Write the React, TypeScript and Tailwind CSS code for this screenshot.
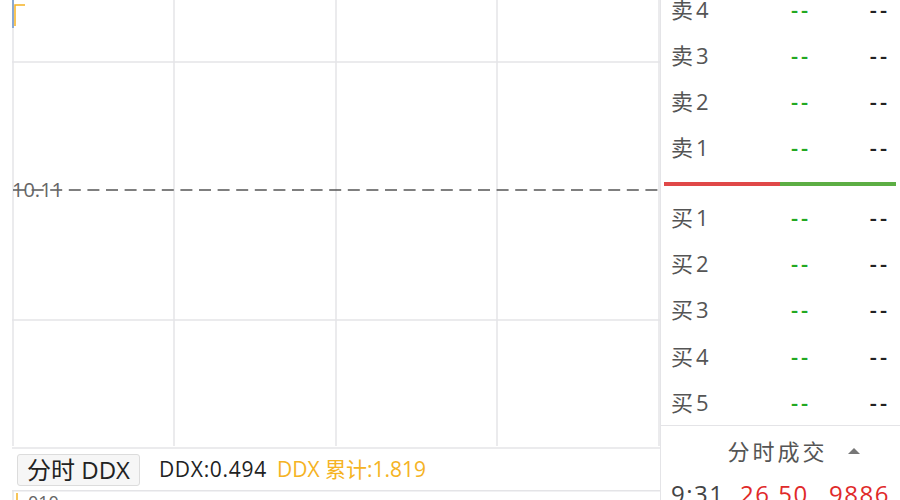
import React from "react";

const sells = ["卖4", "卖3", "卖2", "卖1"];
const buys = ["买1", "买2", "买3", "买4", "买5"];

const font = { fontFamily: '"Open Sans", "Noto Sans CJK SC", sans-serif' };

function QuoteRow({ label, h }: { label: string; h: string }) {
  return (
    <div className={`flex items-center pl-[10px] ${h}`}>
      <span className="w-[106px] text-[22px] tracking-[3px] text-[#555]">{label}</span>
      <span className="w-[48px] text-center text-[22px] font-semibold tracking-[3px] text-[#22a822]">--</span>
      <span className="flex-1 pr-[10px] text-right text-[22px] font-semibold tracking-[3px] text-[#222]">--</span>
    </div>
  );
}

// Intraday price chart: grid, prev-close dashed line and the first ticks
function PriceChart() {
  const xs = [13, 174, 336, 497, 659];
  return (
    <svg width={660} height={449} className="block">
      {xs.map(x => (
        <line key={x} x1={x} y1={0} x2={x} y2={446} stroke="#e4e4e7" strokeWidth={1.5} />
      ))}
      <line x1={12} y1={62} x2={660} y2={62} stroke="#e4e4e7" strokeWidth={1.5} />
      <line x1={12} y1={320} x2={660} y2={320} stroke="#e4e4e7" strokeWidth={1.5} />
      <line x1={12} y1={448} x2={660} y2={448} stroke="#e4e4e7" strokeWidth={1.5} />
      <line x1={13} y1={190} x2={660} y2={190} stroke="#555" strokeWidth={1.3} strokeDasharray="12 6.6" />
      <text x={12} y={197} fontSize={20} fill="#666" style={font}>10.11</text>
      <line x1={13} y1={0} x2={13} y2={28} stroke="#4a7dc0" strokeWidth={1.5} opacity={0.8} />
      <polyline points="15,26 15,5 25,5" fill="none" stroke="#f5b324" strokeWidth={1.5} />
    </svg>
  );
}

function DdxChart() {
  return (
    <svg width={660} height={10} className="block">
      <line x1={12} y1={0.75} x2={660} y2={0.75} stroke="#e4e4e7" strokeWidth={1.5} />
      <line x1={13} y1={0} x2={13} y2={10} stroke="#e4e4e7" strokeWidth={1.5} />
      <line x1={17} y1={3} x2={17} y2={10} stroke="#f5b324" strokeWidth={1.5} />
      <text x={28} y={19} fontSize={18} fill="#666" style={font}>010</text>
    </svg>
  );
}

export default function App() {
  return (
    <div className="flex h-[500px] w-[900px] overflow-hidden bg-white" style={font}>
      <div className="flex w-[660px] shrink-0 flex-col">
        <PriceChart />
        <div className="flex h-[41px] shrink-0 items-center pl-[17px]">
          <button className="h-[32px] rounded-[3px] border border-[#dcdcdc] bg-[#f6f6f6] px-[9px] text-[24px] leading-none text-[#222]">
            分时 DDX
          </button>
          <span className="ml-[19px] text-[21px] tracking-[0.7px] text-[#222]">DDX:0.494</span>
          <span className="ml-[10px] text-[21px] text-[#f5b324]">DDX 累计:1.819</span>
        </div>
        <DdxChart />
      </div>

      <div className="w-[240px] shrink-0 border-l border-[#e4e4e7]">
        <div className="-mt-[14px]">
          {sells.map(s => <QuoteRow key={s} label={s} h="h-[46px]" />)}
        </div>
        <div className="mt-[12px] ml-[3px] mr-[4px] flex h-[4px]">
          <div className="w-[116px] bg-[#e04848]" />
          <div className="flex-1 bg-[#5cae44]" />
        </div>
        <div className="mt-[8px] border-b border-[#e4e4e7]">
          {buys.map(b => <QuoteRow key={b} label={b} h="h-[46.3px]" />)}
        </div>
        <div className="flex h-[50px] items-center justify-center">
          <span className="ml-[26px] text-[22px] tracking-[3px] text-[#555]">分时成交</span>
          <span className="ml-[20px] h-0 w-0 border-x-[6px] border-b-[6px] border-x-transparent border-b-[#777]" />
        </div>
        <div className="flex items-center pl-[10px] text-[24px] tracking-[1.5px]">
          <span className="w-[69px] text-[#444]">9:31</span>
          <span className="text-[#e02a2a]">26.50</span>
          <span className="flex-1 pr-[10px] text-right text-[#e02a2a]">9886</span>
        </div>
      </div>
    </div>
  );
}
